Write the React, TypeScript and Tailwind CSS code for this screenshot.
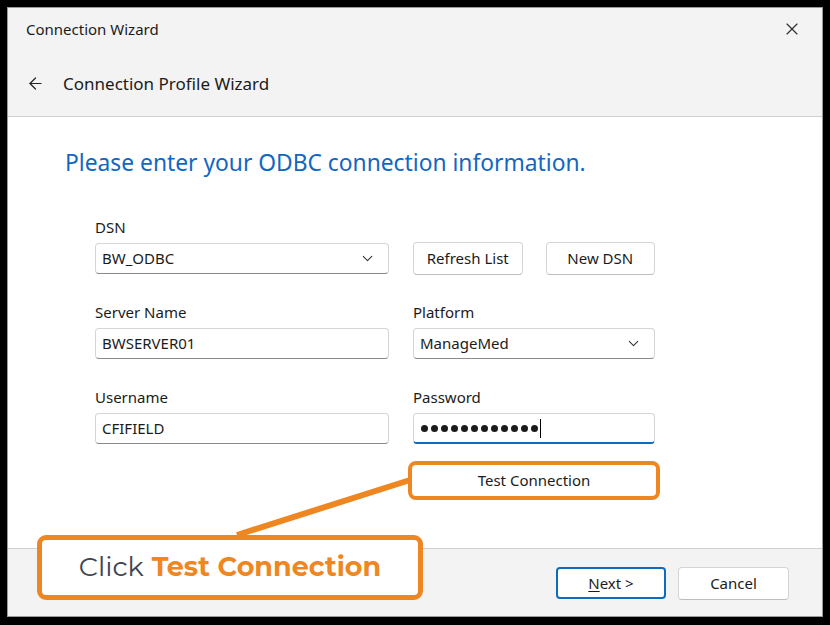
import React from "react";
import { ArrowLeft, ChevronDown, X } from "lucide-react";

const font = { fontFamily: '"Segoe UI", "Noto Sans", "Open Sans", sans-serif' };

function Field({ label, value, select, focused }: { label: string; value: string; select?: boolean; focused?: boolean }) {
  return (
    <div className="flex flex-col">
      <div className="text-[15px] leading-[20px] text-[#1b1b1b] mb-[6px]">{label}</div>
      <div
        className={`h-[31px] flex items-center justify-between pl-[6px] pr-[12px] bg-white rounded-[4px] border border-[#d5d5d5] ${
          focused ? "border-b-2 border-b-[#0f6cbd]" : "border-b-[#8a8a8a]"
        }`}
      >
        <span className="text-[15px] text-[#1b1b1b]">{value}</span>
        {select && <ChevronDown className="w-[17px] h-[17px] text-[#333]" strokeWidth={1.5} />}
      </div>
    </div>
  );
}

function Btn({ children, className = "" }: { children: React.ReactNode; className?: string }) {
  return (
    <div
      className={`h-[33px] flex items-center justify-center bg-white rounded-[4px] border border-[#d5d5d5] border-b-[#bdbdbd] text-[15px] text-[#1b1b1b] ${className}`}
    >
      {children}
    </div>
  );
}

export default function App() {
  return (
    <div className="w-[830px] h-[625px] bg-black pt-[7px] pl-[7px] pr-[7px] pb-[8px]" style={font}>
      <div className="relative w-full h-full flex flex-col border border-[#9a9a9a] bg-[#f3f3f3]">
        {/* Header */}
        <div className="h-[109px] flex flex-col border-b border-[#d0d0d0]">
          <div className="flex items-center justify-between pl-[18px] pr-[20px] pt-[10px]">
            <span className="text-[15px] text-[#1b1b1b]">Connection Wizard</span>
            <X className="w-[20px] h-[20px] text-[#333]" strokeWidth={1.4} />
          </div>
          <div className="flex items-center gap-[18px] pl-[18px] mt-[30px]">
            <ArrowLeft className="w-[19px] h-[19px] text-[#222]" strokeWidth={1.5} />
            <span className="text-[17px] text-[#1b1b1b]">Connection Profile Wizard</span>
          </div>
        </div>

        {/* Body */}
        <div className="flex-1 bg-white pl-[57px] pt-[31px]">
          <h1 className="text-[22.8px] leading-[30px] text-[#1167c2]">Please enter your ODBC connection information.</h1>
          <div className="pl-[30px] pt-[39px] grid grid-cols-[294px_242px] gap-x-[24px] gap-y-[28px]">
            <Field label="DSN" value="BW_ODBC" select />
            <div className="flex items-end gap-[23px]">
              <Btn className="w-[110px] mb-[-1px]">Refresh List</Btn>
              <Btn className="w-[110px] mb-[-1px]">New DSN</Btn>
            </div>
            <Field label="Server Name" value="BWSERVER01" />
            <Field label="Platform" value="ManageMed" select />
            <Field label="Username" value="CFIFIELD" />
            <div className="flex flex-col">
              <div className="text-[15px] leading-[20px] text-[#1b1b1b] mb-[6px]">Password</div>
              <div className="h-[31px] flex items-center pl-[7px] bg-white rounded-[4px] border border-[#d5d5d5] border-b-2 border-b-[#0f6cbd]">
                <div className="flex items-center gap-[3px]">
                  {Array.from({ length: 12 }).map((_, i) => (
                    <span key={i} className="w-[7px] h-[7px] rounded-full bg-[#1b1b1b]" />
                  ))}
                </div>
                <span className="w-px h-[19px] bg-black ml-[2px]" />
              </div>
            </div>
            <div />
            <div className="-mt-[11px] -ml-[5px] w-[252px] h-[39px] rounded-[8px] border-[4px] border-[#ee8722] p-[1px]">
              <div className="h-full flex items-center justify-center bg-white rounded-[3px] text-[15px] text-[#1b1b1b]">
                Test Connection
              </div>
            </div>
          </div>
        </div>

        {/* Footer */}
        <div className="h-[68px] border-t border-[#d0d0d0] flex items-center justify-end gap-[12px] pr-[33px] pt-[1px]">
          <div className="w-[110px] h-[32px] flex items-center justify-center bg-white rounded-[4px] border-2 border-[#0f6cbd] text-[15px] text-[#1b1b1b]">
            <span>
              <span className="underline underline-offset-2">N</span>ext &gt;
            </span>
          </div>
          <Btn className="w-[111px] h-[32px]">Cancel</Btn>
        </div>

        {/* Annotation */}
        <svg className="absolute left-0 top-0 pointer-events-none" width="815" height="609">
          <line x1="229" y1="527" x2="402" y2="472" stroke="#ee8722" strokeWidth="6" />
        </svg>
        <div
          className="absolute left-[29px] top-[527px] w-[386px] h-[65px] rounded-[9px] border-[5px] border-[#ee8722] bg-white flex items-center justify-center text-[27px]"
          style={{ fontFamily: '"Montserrat", "Lato", "Open Sans", sans-serif' }}
        >
          <span className="text-[#3d4450] mr-[8px]">Click</span>
          <span className="text-[#ee8722] font-bold">Test Connection</span>
        </div>
      </div>
    </div>
  );
}
